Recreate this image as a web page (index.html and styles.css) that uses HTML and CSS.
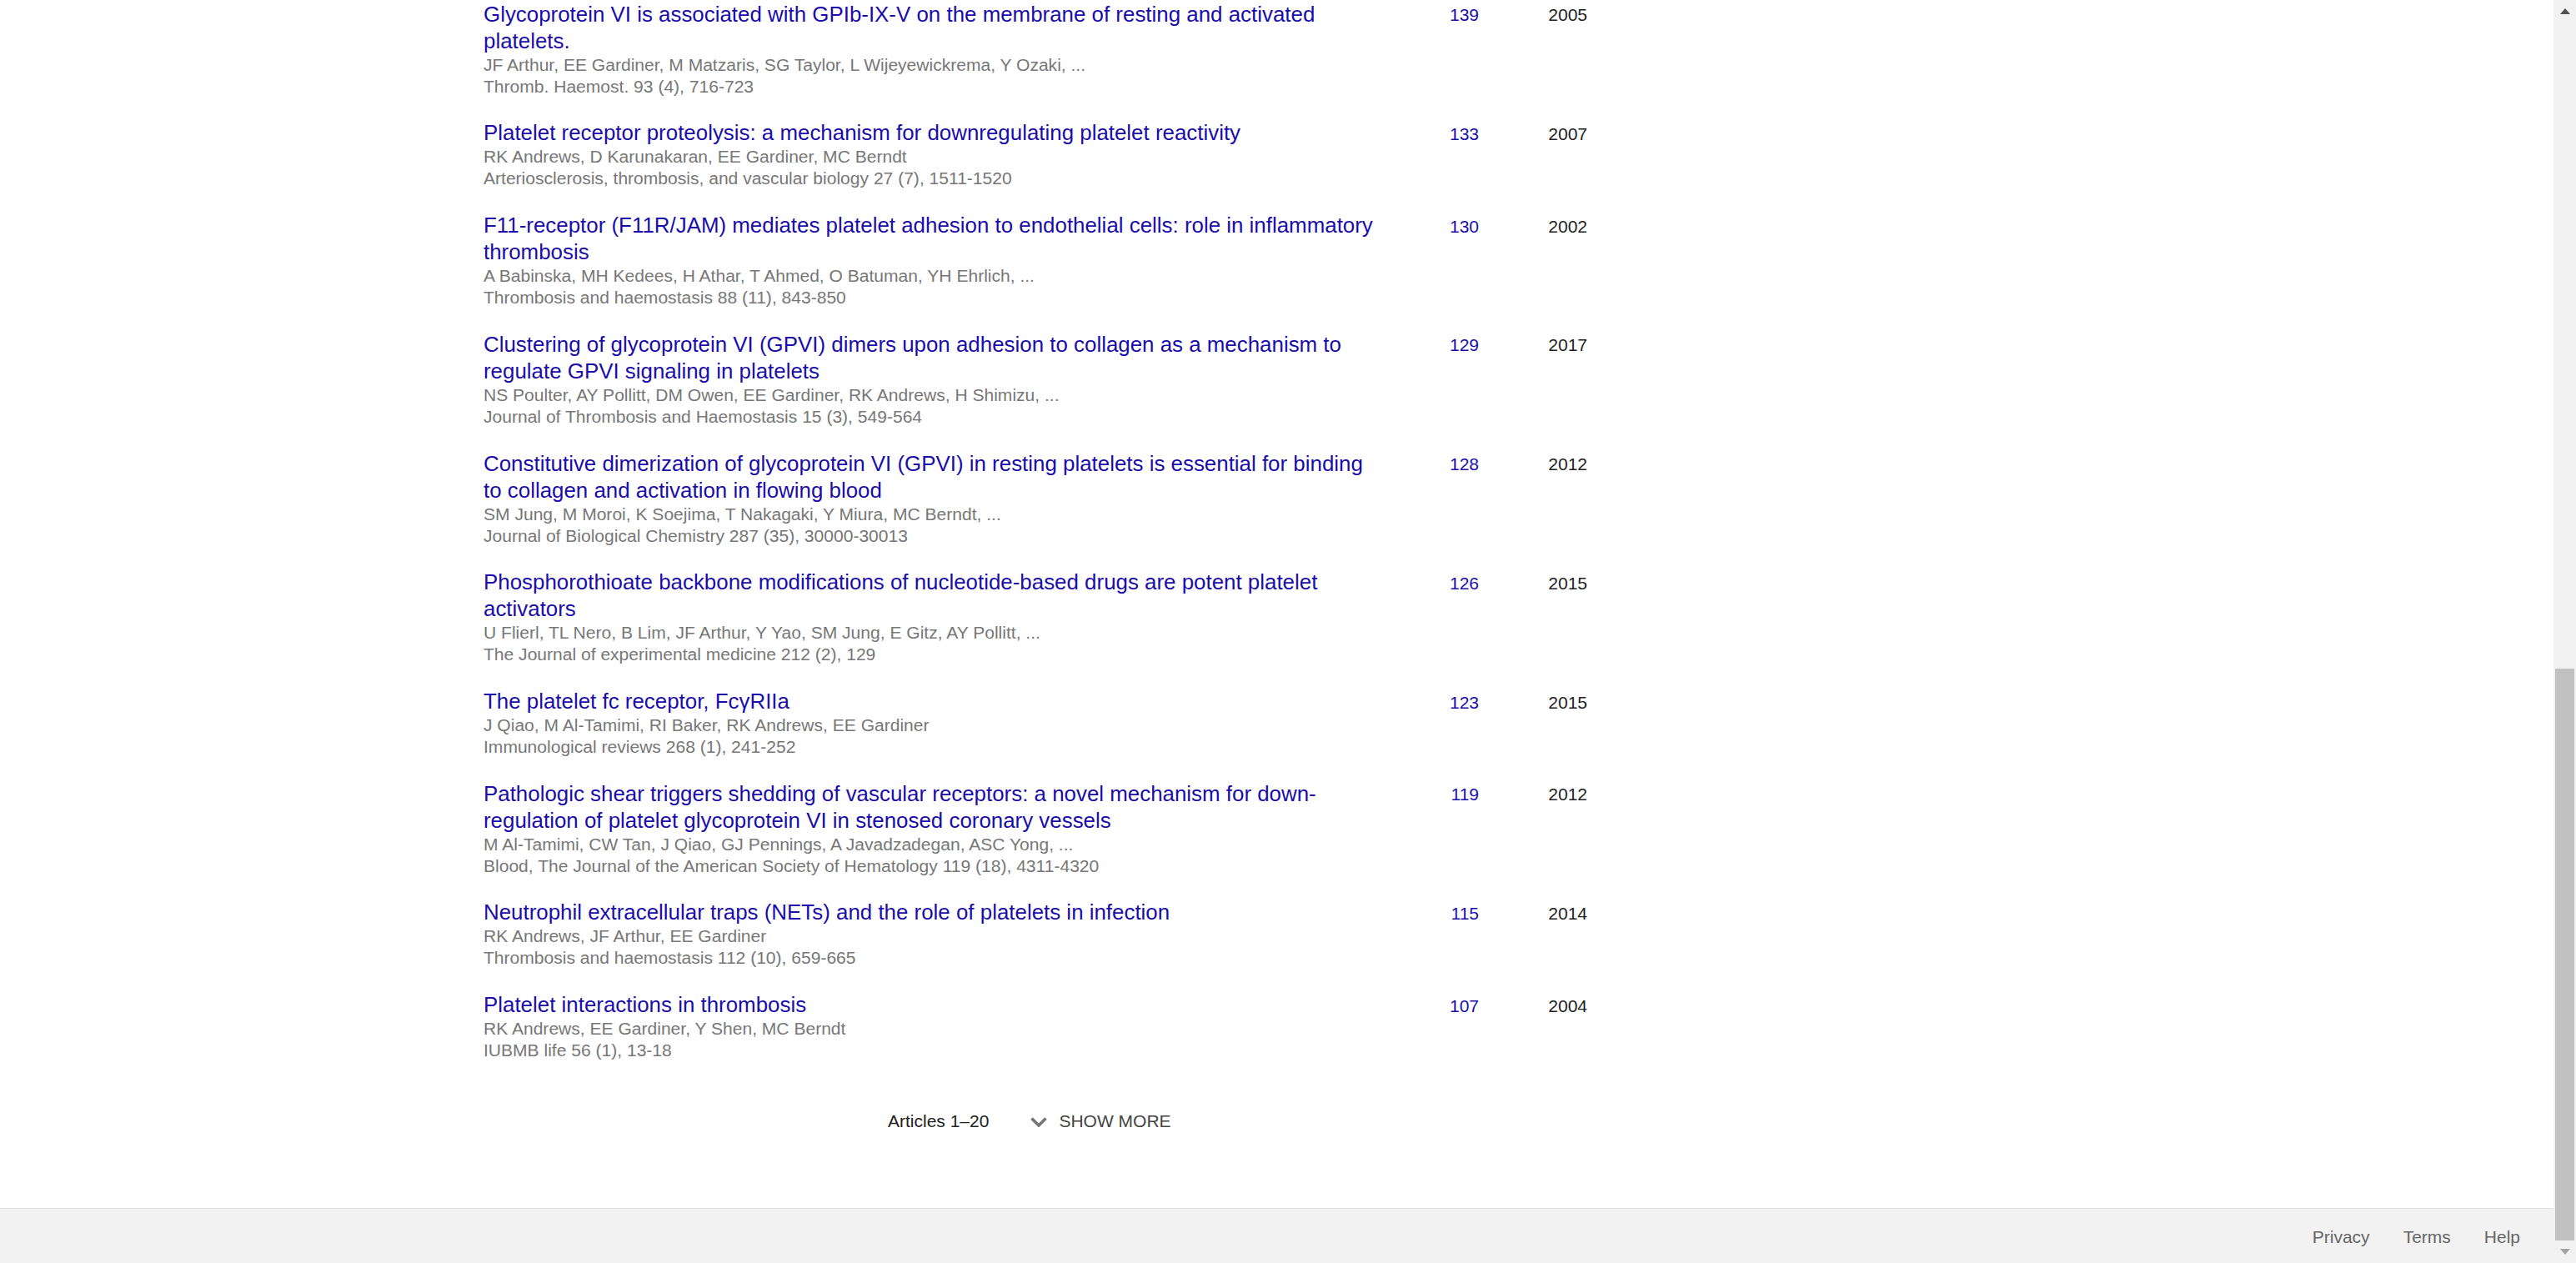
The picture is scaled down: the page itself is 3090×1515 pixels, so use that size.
FILE: index.html
```html
<!DOCTYPE html>
<html lang="en">
<head>
<meta charset="utf-8">
<title>Articles</title>
<link rel="stylesheet" href="styles.css">
</head>
<body>
<div class="page">
  <main class="main">
    <div class="list">
      <div class="row">
        <div class="cell-title">
          <a class="title" href="#">Glycoprotein VI is associated with GPIb-IX-V on the membrane of resting and activated platelets.</a>
          <div class="meta">JF Arthur, EE Gardiner, M Matzaris, SG Taylor, L Wijeyewickrema, Y Ozaki, ...</div>
          <div class="meta">Thromb. Haemost. 93 (4), 716-723</div>
        </div>
        <a class="cite" href="#">139</a>
        <div class="year">2005</div>
      </div>
      <div class="row">
        <div class="cell-title">
          <a class="title" href="#">Platelet receptor proteolysis: a mechanism for downregulating platelet reactivity</a>
          <div class="meta">RK Andrews, D Karunakaran, EE Gardiner, MC Berndt</div>
          <div class="meta">Arteriosclerosis, thrombosis, and vascular biology 27 (7), 1511-1520</div>
        </div>
        <a class="cite" href="#">133</a>
        <div class="year">2007</div>
      </div>
      <div class="row">
        <div class="cell-title">
          <a class="title" href="#">F11-receptor (F11R/JAM) mediates platelet adhesion to endothelial cells: role in inflammatory thrombosis</a>
          <div class="meta">A Babinska, MH Kedees, H Athar, T Ahmed, O Batuman, YH Ehrlich, ...</div>
          <div class="meta">Thrombosis and haemostasis 88 (11), 843-850</div>
        </div>
        <a class="cite" href="#">130</a>
        <div class="year">2002</div>
      </div>
      <div class="row">
        <div class="cell-title">
          <a class="title" href="#">Clustering of glycoprotein VI (GPVI) dimers upon adhesion to collagen as a mechanism to regulate GPVI signaling in platelets</a>
          <div class="meta">NS Poulter, AY Pollitt, DM Owen, EE Gardiner, RK Andrews, H Shimizu, ...</div>
          <div class="meta">Journal of Thrombosis and Haemostasis 15 (3), 549-564</div>
        </div>
        <a class="cite" href="#">129</a>
        <div class="year">2017</div>
      </div>
      <div class="row">
        <div class="cell-title">
          <a class="title" href="#">Constitutive dimerization of glycoprotein VI (GPVI) in resting platelets is essential for binding to collagen and activation in flowing blood</a>
          <div class="meta">SM Jung, M Moroi, K Soejima, T Nakagaki, Y Miura, MC Berndt, ...</div>
          <div class="meta">Journal of Biological Chemistry 287 (35), 30000-30013</div>
        </div>
        <a class="cite" href="#">128</a>
        <div class="year">2012</div>
      </div>
      <div class="row">
        <div class="cell-title">
          <a class="title" href="#">Phosphorothioate backbone modifications of nucleotide-based drugs are potent platelet activators</a>
          <div class="meta">U Flierl, TL Nero, B Lim, JF Arthur, Y Yao, SM Jung, E Gitz, AY Pollitt, ...</div>
          <div class="meta">The Journal of experimental medicine 212 (2), 129</div>
        </div>
        <a class="cite" href="#">126</a>
        <div class="year">2015</div>
      </div>
      <div class="row">
        <div class="cell-title">
          <a class="title" href="#">The platelet fc receptor, FcγRIIa</a>
          <div class="meta">J Qiao, M Al-Tamimi, RI Baker, RK Andrews, EE Gardiner</div>
          <div class="meta">Immunological reviews 268 (1), 241-252</div>
        </div>
        <a class="cite" href="#">123</a>
        <div class="year">2015</div>
      </div>
      <div class="row">
        <div class="cell-title">
          <a class="title" href="#">Pathologic shear triggers shedding of vascular receptors: a novel mechanism for down-regulation of platelet glycoprotein VI in stenosed coronary vessels</a>
          <div class="meta">M Al-Tamimi, CW Tan, J Qiao, GJ Pennings, A Javadzadegan, ASC Yong, ...</div>
          <div class="meta">Blood, The Journal of the American Society of Hematology 119 (18), 4311-4320</div>
        </div>
        <a class="cite" href="#">119</a>
        <div class="year">2012</div>
      </div>
      <div class="row">
        <div class="cell-title">
          <a class="title" href="#">Neutrophil extracellular traps (NETs) and the role of platelets in infection</a>
          <div class="meta">RK Andrews, JF Arthur, EE Gardiner</div>
          <div class="meta">Thrombosis and haemostasis 112 (10), 659-665</div>
        </div>
        <a class="cite" href="#">115</a>
        <div class="year">2014</div>
      </div>
      <div class="row">
        <div class="cell-title">
          <a class="title" href="#">Platelet interactions in thrombosis</a>
          <div class="meta">RK Andrews, EE Gardiner, Y Shen, MC Berndt</div>
          <div class="meta">IUBMB life 56 (1), 13-18</div>
        </div>
        <a class="cite" href="#">107</a>
        <div class="year">2004</div>
      </div>
    </div>
    <div class="pager">
      <span class="count">Articles 1–20</span>
      <button class="more" type="button">
        <svg class="chev" width="20" height="12" viewBox="0 0 20 12"><path d="M1.5 1.5 L10 10 L18.5 1.5" fill="none" stroke="#777" stroke-width="3.6"/></svg>
        <span>SHOW MORE</span>
      </button>
    </div>
  </main>
  <footer class="footer">
    <a href="#">Privacy</a>
    <a href="#">Terms</a>
    <a href="#">Help</a>
  </footer>
</div>
<div class="scrollbar">
  <div class="sb-btn"><span class="tri-up"></span></div>
  <div class="sb-track"><div class="sb-thumb"></div></div>
  <div class="sb-btn"><span class="tri-down"></span></div>
</div>
</body>
</html>
```

FILE: styles.css
```css
html, body {
  margin: 0;
  padding: 0;
  height: 100%;
  overflow: hidden;
}
body {
  display: flex;
  font-family: "Liberation Sans", Arial, sans-serif;
  background: #fff;
  color: #222;
}
.page {
  flex: 1;
  display: flex;
  flex-direction: column;
  height: 100vh;
  min-width: 0;
}
.main {
  flex: 1;
  overflow: hidden;
  padding-left: 580px;
}
.list {
  margin-top: -12.6px;
  width: 1324px;
}
.row {
  display: grid;
  grid-template-columns: 1077px 117px 130px;
}
.cell-title {
  padding: 13.4px 0;
}
.title {
  display: block;
  font-size: 25.9px;
  line-height: 32px;
  color: #1a0dab;
  text-decoration: none;
}
.meta {
  font-size: 21.05px;
  line-height: 25.95px;
  color: #777;
}
.cite, .year {
  font-size: 21px;
  line-height: 32px;
  padding-top: 15px;
  text-align: right;
  text-decoration: none;
}
.cite { color: #1a0dab; }
.year { color: #222; }
.pager {
  display: flex;
  align-items: center;
  padding-left: 485px;
  margin-top: 43px;
  height: 32px;
}
.count {
  font-size: 21px;
  line-height: 32px;
  color: #222;
}
.more {
  display: flex;
  align-items: center;
  gap: 14px;
  margin-left: 50px;
  padding: 0;
  border: 0;
  background: none;
  font-family: "Liberation Sans", Arial, sans-serif;
  font-size: 21px;
  line-height: 32px;
  color: #444;
}
.chev { display: block; margin-top: 2px; }
.footer {
  height: 65px;
  border-top: 1px solid #e2e2e2;
  background: #f2f2f2;
  display: flex;
  justify-content: flex-end;
  align-items: center;
  gap: 40px;
  padding-right: 40px;
}
.footer a {
  font-size: 21px;
  line-height: 32px;
  margin-top: 2px;
  color: #666;
  text-decoration: none;
}
.scrollbar {
  width: 27px;
  height: 100vh;
  background: #f1f1f1;
  display: flex;
  flex-direction: column;
}
.sb-btn {
  height: 27px;
  display: flex;
  align-items: center;
  justify-content: center;
}
.sb-track {
  flex: 1;
  display: flex;
  flex-direction: column;
  justify-content: flex-end;
}
.sb-thumb {
  height: 686px;
  margin: 0 2px;
  background: #c1c1c1;
}
.tri-up {
  width: 0; height: 0;
  border-left: 6.5px solid transparent;
  border-right: 6.5px solid transparent;
  border-bottom: 7px solid #505050;
}
.tri-down {
  width: 0; height: 0;
  border-left: 6.5px solid transparent;
  border-right: 6.5px solid transparent;
  border-top: 7px solid #a3a3a3;
}
```
